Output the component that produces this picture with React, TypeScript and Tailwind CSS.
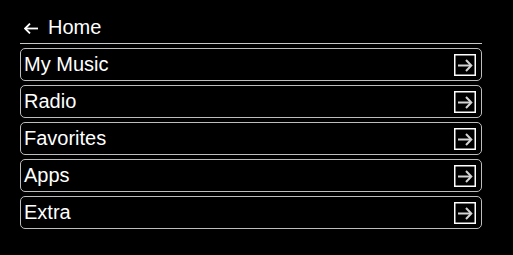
const items = ["My Music", "Radio", "Favorites", "Apps", "Extra"];

function BackArrow() {
  return (
    <svg width="14" height="11" viewBox="0 0 14 11" className="mt-[1px] shrink-0" fill="none">
      <path d="M1 5.5H14" stroke="white" strokeWidth="1.8" />
      <path d="M6 0.6L1.1 5.5L6 10.4" stroke="white" strokeWidth="1.8" />
    </svg>
  );
}

function GoIcon() {
  return (
    <svg width="22" height="22" viewBox="0 0 22 22" className="shrink-0" fill="none">
      <rect x="0.75" y="0.75" width="20.5" height="20.5" stroke="white" strokeWidth="1.5" />
      <path d="M4 11.5H17" stroke="#d4d4d4" strokeWidth="2" />
      <path d="M12 6L17.3 11.5L12 17" stroke="#d4d4d4" strokeWidth="2" />
    </svg>
  );
}

export default function App() {
  return (
    <div className="w-[513px] h-[255px] bg-black text-white font-['Liberation_Sans',Arial,sans-serif]">
      <div className="ml-[20px] w-[462px] pt-[16px]">
        <div className="flex items-center pb-[4px] border-b border-[#c8c8c8] text-[20px] leading-[23px]">
          <span className="ml-[4px] mr-[10px] flex">
            <BackArrow />
          </span>
          <span>Home</span>
        </div>
        <div className="mt-[4px] flex flex-col gap-[4px]">
          {items.map((label) => (
            <div
              key={label}
              className="h-[33px] flex items-center justify-between border border-[#bdbdbd] rounded-[5px] pl-[3px] pr-[5px]"
            >
              <span className="text-[20px] leading-[23px]">{label}</span>
              <GoIcon />
            </div>
          ))}
        </div>
      </div>
    </div>
  );
}
